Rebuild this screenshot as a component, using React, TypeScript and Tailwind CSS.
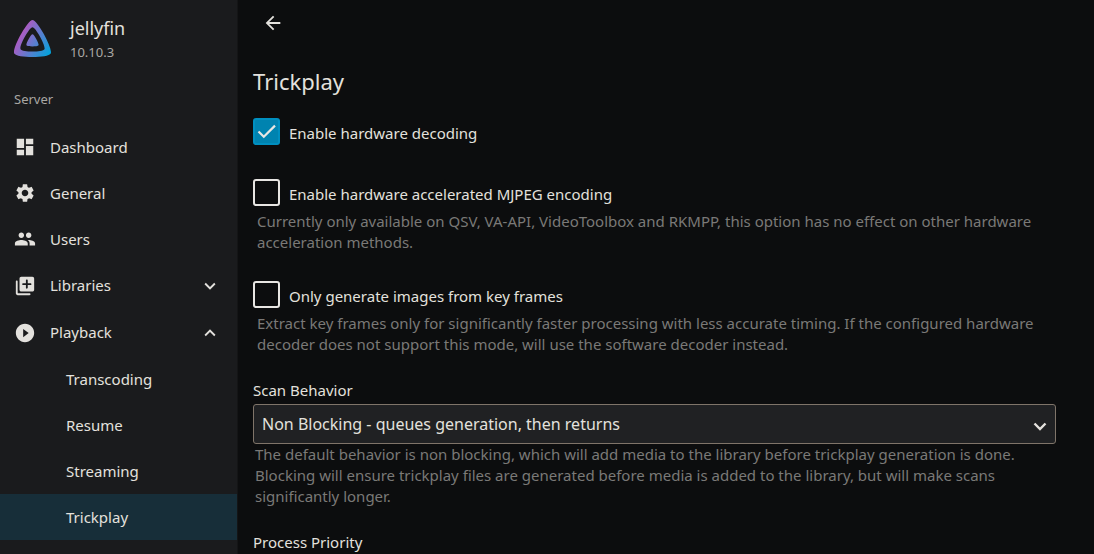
import { useState, type ReactNode } from "react";
import {
  MdArrowBack,
  MdDashboard,
  MdExpandLess,
  MdExpandMore,
  MdPeople,
  MdPlayCircleFilled,
  MdSettings,
} from "react-icons/md";

function Logo() {
  return (
    <svg viewBox="0 0 24 24" className="size-[37px] shrink-0" aria-hidden="true">
      <defs>
        <linearGradient id="logo-fill" gradientUnits="userSpaceOnUse" x1="4.5" y1="9.7" x2="24" y2="21">
          <stop offset="0" stopColor="#aa5cc3" />
          <stop offset="1" stopColor="#00a4dc" />
        </linearGradient>
      </defs>
      <path
        fill="url(#logo-fill)"
        d="M12 .002C8.826.002-1.398 18.537.16 21.666c1.56 3.129 22.14 3.094 23.682 0C25.384 18.573 15.177 0 12 0zm7.76 18.949c-1.008 2.028-14.493 2.05-15.514 0C3.224 16.9 9.92 4.755 12.003 4.755c2.081 0 8.77 12.166 7.759 14.196zM12 9.198c-1.054 0-4.446 6.15-3.93 7.189.518 1.04 7.348 1.027 7.86 0 .511-1.027-2.874-7.19-3.93-7.19z"
      />
    </svg>
  );
}

/* Solid card with a plus cut out, over the left and bottom edge of a second card */
function LibraryIcon() {
  return (
    <svg viewBox="0 0 24 24" fill="currentColor" className="size-[22px]" aria-hidden="true">
      <path d="M3 6c-.55 0-1 .45-1 1v13c0 1.100.9 2 2 2h13c.55 0 1-.45 1-1s-.45-1-1-1H5c-.55 0-1-.45-1-1V7c0-.55-.45-1-1-1zm17-4H8c-1.100 0-2 .9-2 2v12c0 1.100.9 2 2 2h12c1.100 0 2-.9 2-2V4c0-1.100-.9-2-2-2zm-2 9h-3v3c0 .55-.45 1-1 1s-1-.45-1-1v-3h-3c-.55 0-1-.45-1-1s.45-1 1-1h3V6c0-.55.45-1 1-1s1 .45 1 1v3h3c.55 0 1 .45 1 1s-.45 1-1 1z" />
    </svg>
  );
}

function NavLink({ icon, label }: { icon: ReactNode; label: string }) {
  return (
    <li>
      <a href="#" className="flex h-[46px] items-center gap-3.5 px-3.5">
        <span className="text-[22px]">{icon}</span>
        {label}
      </a>
    </li>
  );
}

function NavGroup({
  icon,
  label,
  initiallyOpen = false,
  children,
}: {
  icon: ReactNode;
  label: string;
  initiallyOpen?: boolean;
  children?: ReactNode;
}) {
  const [open, setOpen] = useState(initiallyOpen);
  return (
    <li>
      <button
        type="button"
        aria-expanded={open}
        onClick={() => setOpen(!open)}
        className="flex h-[47px] w-full items-center gap-3.5 pr-4 pl-3.5 text-left"
      >
        <span className="text-[22px]">{icon}</span>
        <span className="flex-1">{label}</span>
        <span className="text-[22px]">{open ? <MdExpandLess /> : <MdExpandMore />}</span>
      </button>
      {open && children && <ul>{children}</ul>}
    </li>
  );
}

function SubLink({ label, selected = false }: { label: string; selected?: boolean }) {
  return (
    <li>
      <a
        href="#"
        aria-current={selected ? "page" : undefined}
        className={`flex h-[46px] items-center pl-[66px] ${selected ? "bg-[#172e39]" : ""}`}
      >
        {label}
      </a>
    </li>
  );
}

function CheckField({
  id,
  label,
  checked = false,
  children,
}: {
  id: string;
  label: string;
  checked?: boolean;
  children?: ReactNode;
}) {
  return (
    <div className={children ? "mb-7" : "mb-[34px]"}>
      <div className="flex h-[27px] items-center gap-[9px]">
        <span className="relative size-[27px]">
          <input
            id={id}
            type="checkbox"
            defaultChecked={checked}
            aria-describedby={children ? `${id}-help` : undefined}
            className="peer block size-[27px] appearance-none rounded-[3px] border-2 border-[#e8e6e3] checked:border-[#008fc0] checked:bg-[#0083b0]"
          />
          <svg
            viewBox="0 0 27 27"
            className="pointer-events-none absolute inset-0 hidden size-[27px] peer-checked:block"
            aria-hidden="true"
          >
            <path d="M5.500 13.500l5.300 5.300L22 7.600" fill="none" stroke="#e8e6e3" strokeWidth="2.200" />
          </svg>
        </span>
        <label htmlFor={id} className="pt-[3px]">
          {label}
        </label>
      </div>
      {children && (
        <p id={`${id}-help`} className="mt-[5px] pl-1 leading-[21px] text-[#7a7977]">
          {children}
        </p>
      )}
    </div>
  );
}

export default function App() {
  return (
    <div className="flex h-screen overflow-hidden bg-[#0c0d0e] font-['Noto_Sans',sans-serif] text-[15px] text-[#e3e1dd]">
      <aside className="w-[238px] shrink-0 overflow-hidden border-r border-[#141516] bg-[#1a1b1d]">
        <div className="flex items-center gap-[19px] px-3.5 pt-3.5">
          <Logo />
          <div>
            <div className="text-[18px] leading-7">jellyfin</div>
            <div className="text-[13px] leading-5 text-[#a9a7a3]">10.10.3</div>
          </div>
        </div>
        <nav aria-labelledby="server-heading">
          <h2 id="server-heading" className="mt-3.5 flex h-12 items-center px-3.5 text-[13px] text-[#a9a7a3]">
            Server
          </h2>
          <ul>
            <NavLink icon={<MdDashboard />} label="Dashboard" />
            <NavLink icon={<MdSettings />} label="General" />
            <NavLink icon={<MdPeople />} label="Users" />
            <NavGroup icon={<LibraryIcon />} label="Libraries" />
            <NavGroup icon={<MdPlayCircleFilled />} label="Playback" initiallyOpen>
              <SubLink label="Transcoding" />
              <SubLink label="Resume" />
              <SubLink label="Streaming" />
              <SubLink label="Trickplay" selected />
            </NavGroup>
          </ul>
        </nav>
      </aside>

      <main className="min-w-0 flex-1 overflow-hidden pr-[38px] pl-[15px]">
        <header className="flex h-[46px] items-center pl-[9px]">
          <button type="button" aria-label="Back" className="text-[22px]">
            <MdArrowBack />
          </button>
        </header>
        <form>
          <h1 className="mt-[19px] mb-[21px] text-[22px] leading-8">Trickplay</h1>
          <CheckField id="hw-decoding" label="Enable hardware decoding" checked />
          <CheckField id="hw-mjpeg" label="Enable hardware accelerated MJPEG encoding">
            Currently only available on QSV, VA-API, VideoToolbox and RKMPP, this option has no effect on other hardware
            acceleration methods.
          </CheckField>
          <CheckField id="key-frames" label="Only generate images from key frames">
            Extract key frames only for significantly faster processing with less accurate timing. If the configured
            hardware decoder does not support this mode, will use the software decoder instead.
          </CheckField>
          <div className="-mt-[5px] mb-[23px]">
            <label htmlFor="scan-behavior" className="mb-0.5 block leading-6">
              Scan Behavior
            </label>
            <div className="relative">
              <select
                id="scan-behavior"
                aria-describedby="scan-behavior-help"
                className="block h-10 w-full appearance-none rounded-[3px] border border-[#7f7469] bg-[#202123] px-2 text-[16px]"
              >
                <option>Non Blocking - queues generation, then returns</option>
                <option>Blocking - queues generation, blocks scan until complete</option>
              </select>
              <svg
                viewBox="0 0 14 9"
                className="pointer-events-none absolute top-[18px] right-[9px] h-[9px] w-3.5"
                aria-hidden="true"
              >
                <path d="M1.500 1.500 7 7l5.500-5.500" fill="none" stroke="currentColor" strokeWidth="2.400" />
              </svg>
            </div>
            <p id="scan-behavior-help" className="pl-0.5 leading-[21px] text-[#7a7977]">
              The default behavior is non blocking, which will add media to the library before trickplay generation is
              done. Blocking will ensure trickplay files are generated before media is added to the library, but will
              make scans significantly longer.
            </p>
          </div>
          <div>
            <label htmlFor="process-priority" className="mb-0.5 block leading-6">
              Process Priority
            </label>
            <select
              id="process-priority"
              className="block h-10 w-full appearance-none rounded-[3px] border border-[#7f7469] bg-[#202123] px-2 text-[16px]"
            >
              <option>Below Normal</option>
            </select>
          </div>
        </form>
      </main>
    </div>
  );
}
